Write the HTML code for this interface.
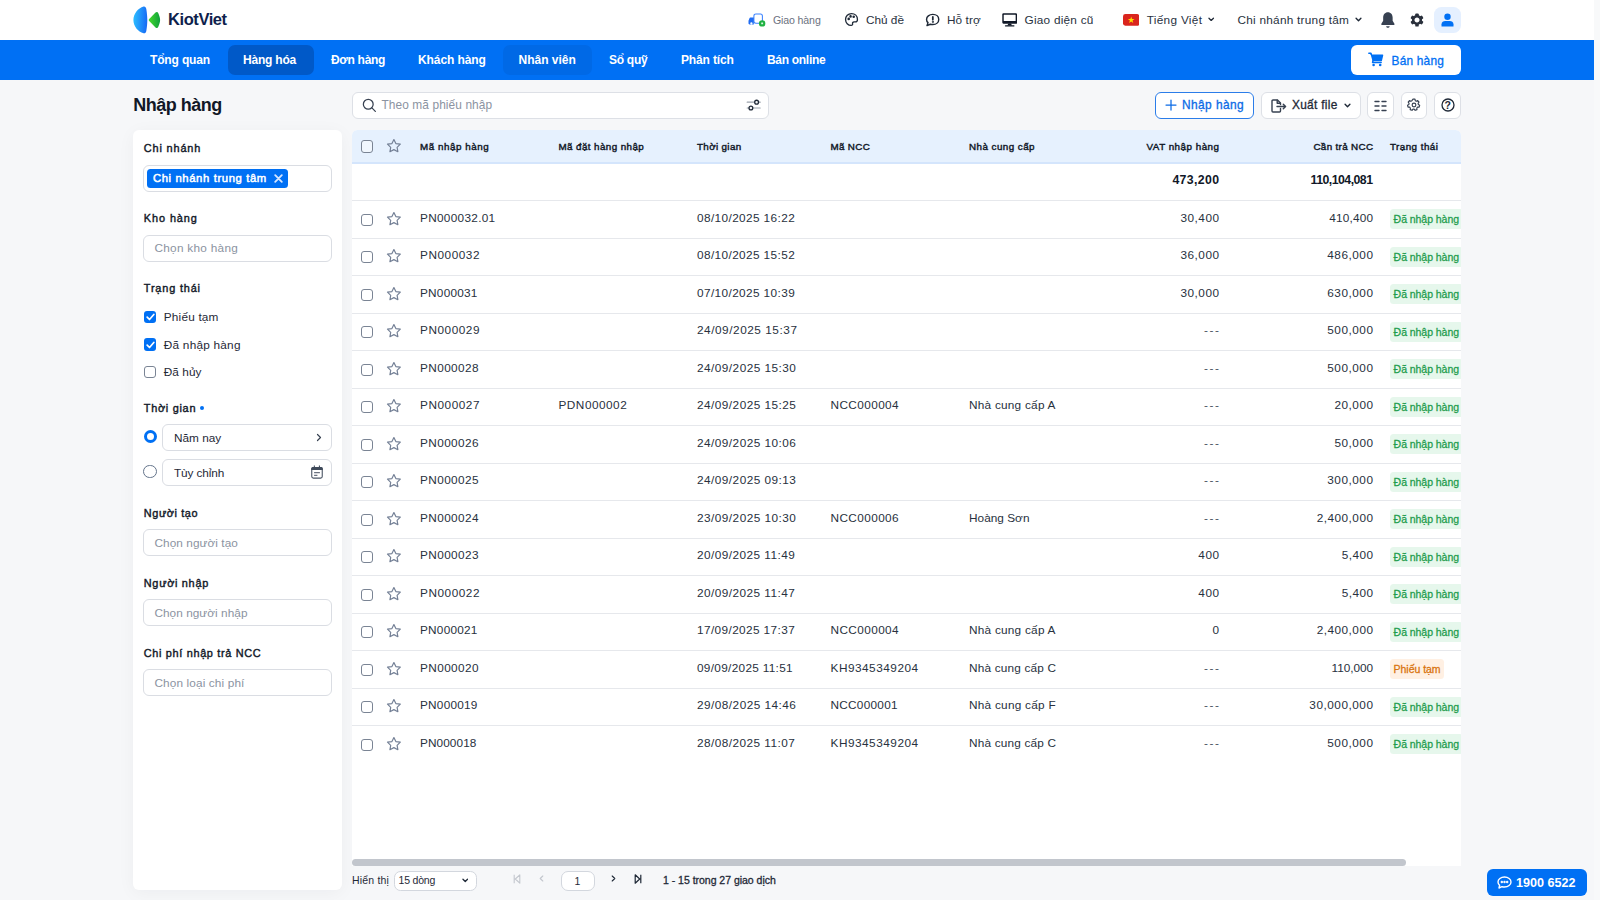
<!DOCTYPE html>
<html lang="vi"><head><meta charset="utf-8"><title>Nhập hàng - KiotViet</title>
<style>
*{box-sizing:border-box;margin:0;padding:0}
html,body{width:1600px;height:900px;overflow:hidden}
body{background:#f6f7f9;font-family:"Liberation Sans",sans-serif;color:#1f2937;position:relative;font-size:12px}
.abs{position:absolute}
svg{display:block}
/* top header */
#hdr{position:absolute;left:0;top:0;width:1594px;height:40px;background:#fff}
#sbar{position:absolute;left:1594px;top:0;width:6px;height:900px;background:#f8f9fa}
#nav{position:absolute;left:0;top:40px;width:1594px;height:40px;background:#0070f4}
.t{position:absolute;white-space:nowrap;line-height:1}
.nv{position:absolute;top:54px;color:#fff;font-weight:700;font-size:12px;white-space:nowrap;line-height:1}
.pill{position:absolute;top:45px;height:30px;border-radius:7px}
.hd{position:absolute;top:14.6px;font-size:11.8px;color:#283140;white-space:nowrap;line-height:1}
/* sidebar */
#side{position:absolute;left:133.3px;top:130px;width:208.4px;height:760.3px;background:#fff;border-radius:6px;box-shadow:0 3px 18px rgba(16,24,40,.045)}
.lb{position:absolute;left:10.5px;font-weight:400;-webkit-text-stroke:.4px #111827;font-size:10.9px;color:#111827;line-height:1;white-space:nowrap}
.inp{position:absolute;left:9.95px;width:189.15px;height:26.7px;border:1px solid #dadde3;border-radius:6px;background:#fff}
.ph{position:absolute;left:10.2px;top:7.4px;font-size:11.8px;color:#8b93a1;line-height:1;white-space:nowrap}
.ck{position:absolute;left:10.9px;width:12.3px;height:12.3px;border-radius:3px}
.ck.on{background:#0070f4}
.ck.off{border:1.25px solid #7a8494;background:#fff}
.ckl{position:absolute;left:30.5px;font-size:11.8px;color:#1f2937;line-height:1;white-space:nowrap}
/* table */
#tb{position:absolute;left:352px;top:130px;width:1109px;height:735.5px;background:#fff;border-radius:5.5px 5.5px 0 0;overflow:hidden}
#th{position:absolute;left:0;top:0;width:100%;height:34px;background:#e6f1fe;border-bottom:2px solid #d4e5fc}
.h{position:absolute;top:12px;font-weight:400;-webkit-text-stroke:.42px #111827;font-size:9.8px;color:#111827;line-height:1;white-space:nowrap}
.tr{position:absolute;left:0;width:100%;height:37.5px;border-top:1px solid #e6e8ec}
.cb{position:absolute;left:8.8px;top:12.6px;width:12.4px;height:12.4px;border:1.25px solid #7a8494;border-radius:3px;background:#fff}
.star{position:absolute;left:33.1px;top:8.9px;width:17.8px;height:17.8px}
.c{position:absolute;top:11.7px;font-size:11.8px;color:#283140;line-height:1;white-space:nowrap}
.c1{left:68px}.c2{left:206.5px}.c3{left:345px}.c4{left:478.5px}.c5{left:617px}
.r{text-align:right}
.c6{right:242px}.c7{right:88px}
.dash{color:#4b5563}
.bd{position:absolute;left:1038px;top:8.1px;height:20px;border-radius:3.5px;font-size:10.5px;line-height:20px;padding:0 3.6px;white-space:nowrap}
.bt{-webkit-text-stroke:.28px currentColor}
.md{-webkit-text-stroke:.3px currentColor}
.sb{-webkit-text-stroke:.5px currentColor}
.bd.g{background:#e6f7ec;color:#1f9d4d}
.bd.o{background:#fff0e3;color:#d9730d}
.b{font-weight:700;color:#111827}
</style></head><body>
<div id="hdr"></div><div id="sbar"></div><div id="nav"></div>
<!-- logo -->
<svg class="abs" style="left:133px;top:6px;width:30px;height:28px" viewBox="0 0 30 28">
<defs><linearGradient id="lg1" x1="0" y1="0.500" x2="1" y2="0.600"><stop offset="0" stop-color="#2bbcff"/><stop offset="1" stop-color="#1769f5"/></linearGradient>
<linearGradient id="lg2" x1="0" y1="0" x2="1" y2="0"><stop offset="0" stop-color="#45d92c"/><stop offset="1" stop-color="#0fa03c"/></linearGradient></defs>
<path d="M10.600 .5C5 2 .4 8 .4 14s4.600 12 10.200 13.300c1.400.3 2.400-.8 2.700-2.300.7-4 1-8 1-11s-.3-7-1-11C13 1.200 12 .2 10.600 .5z" fill="url(#lg1)"/>
<path d="M16.200 13l6.300-6.400c1-1 2.300-.7 2.800.6 1.200 2.800 1.800 4.800 1.800 6.800s-.6 4-1.800 6.800c-.5 1.300-1.800 1.600-2.800.6L16.200 15c-.6-.6-.6-1.400 0-2z" fill="url(#lg2)"/>
</svg>
<div class="t" style="letter-spacing:-0.42px;left:168px;top:10.800px;font-size:16.500px;font-weight:700;color:#0f1f4d">KiotViet</div>

<!-- header right -->
<svg class="abs" style="left:748px;top:12px;width:18px;height:15px" viewBox="0 0 18 15"><rect x="5.900" y="1.900" width="8.500" height="9.300" rx="2" fill="none" stroke="#3a82ff" stroke-width="1.050"/><path d="M2.300 5.400h3.500v7H1.600c-.7 0-1.100-.5-1.100-1.100V9c0-.4.100-.8.300-1.100l.8-1.900c.1-.4.400-.6.700-.6z" fill="#1f6bf2"/><circle cx="3.400" cy="11.500" r="1.150" fill="#fff"/><circle cx="14.150" cy="11.400" r="3.200" fill="#1fb141"/><rect x="13.200" y="10.500" width="1.900" height="1.800" rx=".3" fill="#d8f5df"/></svg>
<div class="hd" style="letter-spacing:-0.14px;left:773px;font-size:10.600px;top:14.700px;color:#6b7280">Giao hàng</div>

<svg class="abs" style="left:843.700px;top:12.300px;width:15px;height:15px" viewBox="0 0 24 24" fill="none" stroke="#1f2937" stroke-width="2.100" stroke-linecap="round" stroke-linejoin="round"><path d="M12 2.5C6.5 2.5 2.5 6.7 2.5 12s4 9.5 9 9.5c1.700 0 2.500-1.200 2.200-2.600-.4-1.600.6-3 2.300-3H18c2 0 3.500-1.600 3.500-4C21.500 6.500 17.500 2.500 12 2.500z"/><circle cx="7.500" cy="11" r="1" fill="#1f2937"/><circle cx="10.500" cy="7" r="1" fill="#1f2937"/><circle cx="15.500" cy="7.500" r="1" fill="#1f2937"/></svg>
<div class="hd" style="letter-spacing:-0.02px;left:866px">Chủ đề</div>

<svg class="abs" style="left:925.300px;top:13px;width:15px;height:14px" viewBox="0 0 24 22" fill="none" stroke="#1f2937" stroke-width="2.300" stroke-linecap="round" stroke-linejoin="round"><path d="M12.500 2C6.800 2 2.500 5.600 2.500 10c0 2 .8 3.800 2.300 5.200L3.200 20l5.300-2.200c1.200.3 2.600.4 4 .4 5.700 0 9.500-3.600 9.500-8.200S18.200 2 12.500 2z"/><path d="M12.500 6v4.500" stroke-width="2.800"/><circle cx="12.500" cy="14" r="1" fill="#1f2937" stroke-width="1"/></svg>
<div class="hd" style="letter-spacing:0.07px;left:947px">Hỗ trợ</div>

<svg class="abs" style="left:1001.700px;top:12.700px;width:15.400px;height:14px" viewBox="0 0 16 14.500"><rect x=".3" y=".3" width="15.400" height="10.800" rx="1.200" fill="#111827"/><rect x="1.800" y="1.700" width="12.400" height="6.600" rx=".3" fill="#fff"/><path d="M6.600 11h2.800l1 2H5.600z" fill="#111827"/><rect x="3" y="12.700" width="10" height="1.300" rx=".5" fill="#111827"/></svg>
<div class="hd" style="letter-spacing:0.24px;left:1024.5px">Giao diện cũ</div>

<svg class="abs" style="left:1123px;top:14px;width:16.400px;height:11.800px" viewBox="0 0 17 12" preserveAspectRatio="none"><rect width="17" height="12" rx="2.500" fill="#da251d"/><path d="M8.500 2.600l.85 2.500h2.650l-2.150 1.550.8 2.550L8.500 7.650 6.350 9.200l.8-2.550L5 5.100h2.650z" fill="#ffde00"/></svg>
<div class="hd" style="letter-spacing:0.31px;left:1146.700px">Tiếng Việt</div>
<svg class="abs" style="left:1208.400px;top:17.300px;width:6.400px;height:4.800px" viewBox="0 0 8 6" fill="none" stroke="#1f2937" stroke-width="1.600" stroke-linecap="round" stroke-linejoin="round"><path d="M1.200 1.500L4 4.300 6.800 1.500"/></svg>
<div class="hd" style="letter-spacing:0.25px;left:1237.5px">Chi nhánh trung tâm</div>
<svg class="abs" style="left:1355.200px;top:16.800px;width:7px;height:5.200px" viewBox="0 0 8 6" fill="none" stroke="#1f2937" stroke-width="1.600" stroke-linecap="round" stroke-linejoin="round"><path d="M1.200 1.500L4 4.300 6.800 1.500"/></svg>

<svg class="abs" style="left:1379.700px;top:10.600px;width:15.800px;height:18.200px" viewBox="0 0 15 17"><path d="M7.500 1C4.700 1 3 3.200 3 6v3.200L1.300 12c-.3.600 0 1.200.7 1.200h11c.7 0 1-.6.700-1.200L12 9.200V6c0-2.800-1.700-5-4.500-5z" fill="#374151"/><path d="M5.800 14.300c.2.900.9 1.500 1.700 1.500s1.500-.6 1.700-1.500z" fill="#374151"/></svg>
<svg class="abs" style="left:1410.200px;top:12.800px;width:14px;height:14px" viewBox="-7 -7 14 14"><g fill="#2a303c"><rect x="-1.750" y="-6.600" width="3.500" height="3.400" rx=".9" transform="rotate(0)"/><rect x="-1.750" y="-6.600" width="3.500" height="3.400" rx=".9" transform="rotate(60)"/><rect x="-1.750" y="-6.600" width="3.500" height="3.400" rx=".9" transform="rotate(120)"/><rect x="-1.750" y="-6.600" width="3.500" height="3.400" rx=".9" transform="rotate(180)"/><rect x="-1.750" y="-6.600" width="3.500" height="3.400" rx=".9" transform="rotate(240)"/><rect x="-1.750" y="-6.600" width="3.500" height="3.400" rx=".9" transform="rotate(300)"/></g><circle r="3.800" fill="none" stroke="#2a303c" stroke-width="2.600"/></svg>
<div class="abs" style="left:1434px;top:6.800px;width:27px;height:26.500px;border-radius:7.500px;background:#e5f0ff"></div>
<svg class="abs" style="left:1441px;top:13px;width:13px;height:14px" viewBox="0 0 13 14"><circle cx="6.500" cy="3.700" r="3.200" fill="#0070f4"/><path d="M.5 13.500v-2.300C.5 9 2.500 8 4.200 8h4.600c1.700 0 3.700 1 3.700 3.200v2.300z" fill="#0070f4"/></svg>

<!-- nav -->
<div class="pill" style="left:228px;width:86px;background:#0059c8"></div>
<div class="pill" style="left:503.200px;width:89.300px;background:#0069e6"></div>
<div class="nv" style="letter-spacing:-0.15px;left:150px">Tổng quan</div>
<div class="nv" style="letter-spacing:-0.2px;left:243px">Hàng hóa</div>
<div class="nv" style="letter-spacing:-0.31px;left:331px">Đơn hàng</div>
<div class="nv" style="letter-spacing:-0.09px;left:418px">Khách hàng</div>
<div class="nv" style="letter-spacing:-0.0px;left:518.5px">Nhân viên</div>
<div class="nv" style="letter-spacing:-0.27px;left:609px">Sổ quỹ</div>
<div class="nv" style="letter-spacing:-0.15px;left:681px">Phân tích</div>
<div class="nv" style="letter-spacing:-0.3px;left:767px">Bán online</div>
<div class="abs" style="left:1351px;top:45px;width:110px;height:30px;background:#fff;border-radius:6px"></div>
<svg class="abs" style="left:1368px;top:52px;width:16px;height:15px" viewBox="0 0 16 15"><path d="M.8 1.200h2.200l.6 2M3.600 3.200h11l-1.300 5.300H5.100z" fill="#0070f4" stroke="#0070f4" stroke-width="1.400" stroke-linejoin="round" stroke-linecap="round"/><path d="M5.100 8.500l-.6 2h8.700" fill="none" stroke="#0070f4" stroke-width="1.400" stroke-linecap="round" stroke-linejoin="round"/><circle cx="5.600" cy="13" r="1.300" fill="#0070f4"/><circle cx="12.200" cy="13" r="1.300" fill="#0070f4"/></svg>
<div class="t md" style="letter-spacing:0.2px;left:1391.5px;top:55.8px;font-size:11.9px;color:#0070f4">Bán hàng</div>

<!-- page title + search + toolbar -->
<div class="t" style="letter-spacing:-0.49px;left:133.200px;top:96px;font-size:18px;font-weight:700;color:#111827">Nhập hàng</div>
<div class="abs" style="left:352px;top:91.600px;width:417px;height:27.200px;background:#fff;border:1px solid #dde0e6;border-radius:6px"></div>
<svg class="abs" style="left:362.300px;top:97.900px;width:14.600px;height:14.600px" viewBox="0 0 14 14" fill="none" stroke="#374151" stroke-width="1.200" stroke-linecap="round"><circle cx="6" cy="6" r="4.700"/><path d="M9.500 9.500l3.300 3.300"/></svg>
<div class="t" style="letter-spacing:0.09px;left:381.500px;top:100.300px;font-size:11.900px;color:#8b93a1">Theo mã phiếu nhập</div>
<svg class="abs" style="left:746px;top:98px;width:15px;height:13px" viewBox="0 0 15 13" fill="none" stroke-linecap="round"><path d="M1.200 4.200h13M1.200 10h13" stroke="#9aa1ab" stroke-width="1.200"/><circle cx="10.600" cy="4.150" r="1.900" fill="#f3f4f6" stroke="#1f2937" stroke-width="1.300"/><circle cx="4.900" cy="10" r="1.900" fill="#f3f4f6" stroke="#1f2937" stroke-width="1.300"/></svg>

<div class="abs" style="left:1155px;top:91.600px;width:99px;height:27.200px;background:#fff;border:1px solid #2b7de9;border-radius:6px"></div>
<svg class="abs" style="left:1165px;top:99px;width:12px;height:12px" viewBox="0 0 12 12" fill="none" stroke="#0b6be6" stroke-width="1.250" stroke-linecap="round"><path d="M6 1v10M1 6h10"/></svg>
<div class="t md" style="letter-spacing:0.43px;left:1182px;top:100.2px;font-size:11.9px;color:#0b6be6">Nhập hàng</div>

<div class="abs" style="left:1261px;top:91.600px;width:99.5px;height:27.200px;background:#fff;border:1px solid #dde0e6;border-radius:6px"></div>
<svg class="abs" style="left:1271.300px;top:98.500px;width:16px;height:14px" viewBox="0 0 16 14" fill="none" stroke="#374151" stroke-width="1.400" stroke-linecap="round" stroke-linejoin="round"><path d="M9.500 9.500V12a1 1 0 0 1-1 1H2a1 1 0 0 1-1-1V2a1 1 0 0 1 1-1h4.500l3 3v1.500"/><path d="M6.200 1.200V4.300h3.100"/><path d="M6 7.500h8.500M12.300 5.200l2.300 2.300-2.300 2.300"/></svg>
<div class="t md" style="letter-spacing:0.29px;left:1292px;top:100.2px;font-size:11.9px;color:#1f2937">Xuất file</div>
<svg class="abs" style="left:1343.5px;top:102.5px;width:7px;height:5.2px" viewBox="0 0 8 6" fill="none" stroke="#1f2937" stroke-width="1.600" stroke-linecap="round" stroke-linejoin="round"><path d="M1.200 1.500L4 4.300 6.800 1.500"/></svg>

<div class="abs" style="left:1367.3px;top:91.600px;width:26.4px;height:27.200px;background:#fff;border:1px solid #dde0e6;border-radius:6px"></div>
<svg class="abs" style="left:1374.200px;top:99.500px;width:13px;height:12px" viewBox="0 0 13 12" fill="none" stroke="#374151" stroke-width="1.400" stroke-linecap="round"><path d="M1 1.500h4M8 1.500h4M1 6h4M8 6h4M1 10.500h4M8 10.500h4"/></svg>
<div class="abs" style="left:1401.2px;top:91.600px;width:26px;height:27.200px;background:#fff;border:1px solid #dde0e6;border-radius:6px"></div>
<svg class="abs" style="left:1407.200px;top:98.400px;width:14px;height:14px" viewBox="0 0 24 24" fill="none" stroke="#374151" stroke-width="2" stroke-linejoin="round"><path d="M10.300 2.500h3.400l.5 2.600 1.800.9 2.400-1.200 2.200 2.600-1.500 2.200.3 2 2.300 1.300-.9 3.200-2.700.1-1.300 1.500.3 2.700-3.100 1.200-1.700-2h-2l-1.700 2-3.100-1.200.3-2.700-1.300-1.500-2.700-.1-.9-3.200 2.300-1.300.3-2-1.500-2.200 2.200-2.600 2.400 1.200 1.800-.9z" transform="translate(0 -.5)"/><circle cx="12" cy="12" r="3.200"/></svg>
<div class="abs" style="left:1434.3px;top:91.600px;width:26.4px;height:27.200px;background:#fff;border:1px solid #dde0e6;border-radius:6px"></div>
<svg class="abs" style="left:1440.500px;top:98.400px;width:14px;height:14px" viewBox="0 0 14 14" fill="none" stroke="#1f2937" stroke-width="1.300" stroke-linecap="round"><circle cx="7" cy="7" r="6"/></svg>
<div class="t" style="left:1444.500px;top:99.500px;font-size:10.500px;font-weight:700;color:#1f2937">?</div>
<div id="side">
<div class="lb" style="letter-spacing:0.86px;top:13.1px">Chi nhánh</div>
<div class="inp" style="top:35px"></div>
<div class="abs" style="left:13.800px;top:38.500px;width:141.200px;height:19.700px;background:#0070f4;border-radius:3.500px"></div>
<div class="t sb" style="letter-spacing:0.61px;left:19.600px;top:43.200px;font-size:11.300px;color:#fff">Chi nhánh trung tâm</div>
<svg class="abs" style="left:140.500px;top:44.100px;width:9px;height:9px" viewBox="0 0 9 9" fill="none" stroke="#d6e6ff" stroke-width="1.800" stroke-linecap="round"><path d="M1.200 1.200l6.600 6.600M7.800 1.200L1.200 7.800"/></svg>

<div class="lb" style="letter-spacing:0.92px;top:83.1px">Kho hàng</div>
<div class="inp" style="top:105px"><span class="ph" style="letter-spacing:0.28px">Chọn kho hàng</span></div>

<div class="lb" style="letter-spacing:0.84px;top:153.1px">Trạng thái</div>
<i class="ck on" style="top:180.800px"></i><svg class="abs" style="left:12.300px;top:183px;width:9px;height:8px" viewBox="0 0 9 8" fill="none" stroke="#fff" stroke-width="1.700" stroke-linecap="round" stroke-linejoin="round"><path d="M1.200 4.200l2.300 2.300 4.300-5"/></svg>
<div class="ckl" style="letter-spacing:0.19px;top:182.300px">Phiếu tạm</div>
<i class="ck on" style="top:208.300px"></i><svg class="abs" style="left:12.300px;top:210.500px;width:9px;height:8px" viewBox="0 0 9 8" fill="none" stroke="#fff" stroke-width="1.700" stroke-linecap="round" stroke-linejoin="round"><path d="M1.200 4.200l2.300 2.300 4.300-5"/></svg>
<div class="ckl" style="letter-spacing:0.23px;top:209.600px">Đã nhập hàng</div>
<i class="ck off" style="top:235.900px"></i>
<div class="ckl" style="letter-spacing:0.04px;top:237.200px">Đã hủy</div>

<div class="lb" style="letter-spacing:0.72px;top:272.6px">Thời gian</div>
<div class="abs" style="left:66.300px;top:275.800px;width:4.500px;height:4.500px;border-radius:50%;background:#0070f4"></div>
<div class="abs" style="left:10.500px;top:299.600px;width:13.400px;height:13.400px;border-radius:50%;border:3.600px solid #0070f4;background:#fff"></div>
<div class="inp" style="left:29.100px;width:170px;top:294.100px"><span class="ph" style="letter-spacing:-0.0px;color:#1f2937;left:10.600px;top:8.300px">Năm nay</span>
<svg class="abs" style="left:152.500px;top:8px;width:6px;height:9px" viewBox="0 0 6 9" fill="none" stroke="#374151" stroke-width="1.200" stroke-linecap="round" stroke-linejoin="round"><path d="M1.500 1.500l3 3-3 3"/></svg></div>
<div class="abs" style="left:10.200px;top:334.500px;width:13.600px;height:13.600px;border-radius:50%;border:1.200px solid #64748b;background:#fff"></div>
<div class="inp" style="left:29.100px;width:170px;top:329.400px"><span class="ph" style="letter-spacing:-0.1px;color:#1f2937;left:10.600px;top:7.200px">Tùy chỉnh</span>
<svg class="abs" style="left:147.600px;top:4.600px;width:13px;height:14.500px" viewBox="0 0 13 14.500" fill="none"><rect x="2.800" y=".5" width="1.100" height="2" fill="#4b5565"/><rect x="7.900" y=".5" width="1.100" height="2" fill="#4b5565"/><rect x=".75" y="2.550" width="10.500" height="10.600" rx="1.600" stroke="#4b5565" stroke-width="1.100"/><path d="M.2 5.100V3.600a1.600 1.600 0 0 1 1.600-1.600h8.400a1.600 1.600 0 0 1 1.600 1.600v1.500z" fill="#3f4a5a"/><path d="M3.100 7.600h5.800M3.100 10.400h3.300" stroke="#6b7280" stroke-width="1.100"/></svg></div>

<div class="lb" style="letter-spacing:0.6px;top:377.6px">Người tạo</div>
<div class="inp" style="top:399.400px"><span class="ph" style="letter-spacing:0.07px">Chọn người tạo</span></div>
<div class="lb" style="letter-spacing:0.71px;top:447.6px">Người nhập</div>
<div class="inp" style="top:469.400px"><span class="ph" style="letter-spacing:0.05px">Chọn người nhập</span></div>
<div class="lb" style="letter-spacing:0.67px;top:517.6px">Chi phí nhập trả NCC</div>
<div class="inp" style="top:539.400px"><span class="ph" style="letter-spacing:0.13px">Chọn loại chi phí</span></div>
</div>
<div id="tb">
<div id="th">
<i class="cb" style="top:10.400px;background:rgba(255,255,255,.45)"></i><span class="abs" style="left:0;top:-2.300px"><svg class="star" viewBox="0 0 24 24"><path d="M12 3.4l2.65 5.45 6 .85-4.35 4.2 1.05 5.95L12 17l-5.350 2.850 1.050-5.950-4.350-4.200 6-.850z" fill="none" stroke="#748096" stroke-width="1.600" stroke-linejoin="round"/></svg></span>
<span class="h" style="letter-spacing:0.55px;left:68px">Mã nhập hàng</span>
<span class="h" style="letter-spacing:0.42px;left:206.500px">Mã đặt hàng nhập</span>
<span class="h" style="letter-spacing:0.36px;left:345px">Thời gian</span>
<span class="h" style="letter-spacing:0.34px;left:478.500px">Mã NCC</span>
<span class="h" style="letter-spacing:0.46px;left:617px">Nhà cung cấp</span>
<span class="h r" style="letter-spacing:0.5px;margin-right:-0.5px;right:242px">VAT nhập hàng</span>
<span class="h r" style="letter-spacing:0.35px;margin-right:-0.35px;right:88px">Cần trả NCC</span>
<span class="h" style="letter-spacing:0.46px;left:1038px">Trạng thái</span>
</div>
<div class="abs b r" style="letter-spacing:0.36px;margin-right:-0.36px;right:242px;top:43.500px;font-size:12.300px;line-height:1">473,200</div>
<div class="abs b r" style="letter-spacing:-0.53px;margin-right:0.53px;right:88px;top:43.500px;font-size:12.300px;line-height:1">110,104,081</div>
<div class="tr" style="top:70.0px">
<i class="cb"></i><svg class="star" viewBox="0 0 24 24"><path d="M12 3.4l2.65 5.45 6 .85-4.35 4.2 1.05 5.95L12 17l-5.350 2.850 1.050-5.950-4.350-4.200 6-.850z" fill="none" stroke="#748096" stroke-width="1.600" stroke-linejoin="round"/></svg>
<span class="c c1" style="letter-spacing:0.3px">PN000032.01</span><span class="c c2"></span><span class="c c3" style="letter-spacing:0.39px">08/10/2025 16:22</span><span class="c c4"></span><span class="c r c6" style="letter-spacing:0.48px;margin-right:-0.48px">30,400</span><span class="c r c7" style="letter-spacing:0.17px;margin-right:-0.17px">410,400</span><span class="bd g"><span class="bt" style="letter-spacing:-0.05px">Đã nhập hàng</span></span>
</div>
<div class="tr" style="top:107.5px">
<i class="cb"></i><svg class="star" viewBox="0 0 24 24"><path d="M12 3.4l2.65 5.45 6 .85-4.35 4.2 1.05 5.95L12 17l-5.350 2.850 1.050-5.950-4.350-4.200 6-.850z" fill="none" stroke="#748096" stroke-width="1.600" stroke-linejoin="round"/></svg>
<span class="c c1" style="letter-spacing:0.54px">PN000032</span><span class="c c2"></span><span class="c c3" style="letter-spacing:0.39px">08/10/2025 15:52</span><span class="c c4"></span><span class="c r c6" style="letter-spacing:0.48px;margin-right:-0.48px">36,000</span><span class="c r c7" style="letter-spacing:0.52px;margin-right:-0.52px">486,000</span><span class="bd g"><span class="bt" style="letter-spacing:-0.05px">Đã nhập hàng</span></span>
</div>
<div class="tr" style="top:145.0px">
<i class="cb"></i><svg class="star" viewBox="0 0 24 24"><path d="M12 3.4l2.65 5.45 6 .85-4.35 4.2 1.05 5.95L12 17l-5.350 2.850 1.050-5.950-4.350-4.200 6-.850z" fill="none" stroke="#748096" stroke-width="1.600" stroke-linejoin="round"/></svg>
<span class="c c1" style="letter-spacing:0.23px">PN000031</span><span class="c c2"></span><span class="c c3" style="letter-spacing:0.39px">07/10/2025 10:39</span><span class="c c4"></span><span class="c r c6" style="letter-spacing:0.48px;margin-right:-0.48px">30,000</span><span class="c r c7" style="letter-spacing:0.52px;margin-right:-0.52px">630,000</span><span class="bd g"><span class="bt" style="letter-spacing:-0.05px">Đã nhập hàng</span></span>
</div>
<div class="tr" style="top:182.5px">
<i class="cb"></i><svg class="star" viewBox="0 0 24 24"><path d="M12 3.4l2.65 5.45 6 .85-4.35 4.2 1.05 5.95L12 17l-5.350 2.850 1.050-5.950-4.350-4.200 6-.850z" fill="none" stroke="#748096" stroke-width="1.600" stroke-linejoin="round"/></svg>
<span class="c c1" style="letter-spacing:0.54px">PN000029</span><span class="c c2"></span><span class="c c3" style="letter-spacing:0.54px">24/09/2025 15:37</span><span class="c c4"></span><span class="c r c6 dash" style="letter-spacing:1.57px;margin-right:-1.57px">---</span><span class="c r c7" style="letter-spacing:0.52px;margin-right:-0.52px">500,000</span><span class="bd g"><span class="bt" style="letter-spacing:-0.05px">Đã nhập hàng</span></span>
</div>
<div class="tr" style="top:220.0px">
<i class="cb"></i><svg class="star" viewBox="0 0 24 24"><path d="M12 3.4l2.65 5.45 6 .85-4.35 4.2 1.05 5.95L12 17l-5.350 2.850 1.050-5.950-4.350-4.200 6-.850z" fill="none" stroke="#748096" stroke-width="1.600" stroke-linejoin="round"/></svg>
<span class="c c1" style="letter-spacing:0.4px">PN000028</span><span class="c c2"></span><span class="c c3" style="letter-spacing:0.47px">24/09/2025 15:30</span><span class="c c4"></span><span class="c r c6 dash" style="letter-spacing:1.57px;margin-right:-1.57px">---</span><span class="c r c7" style="letter-spacing:0.52px;margin-right:-0.52px">500,000</span><span class="bd g"><span class="bt" style="letter-spacing:-0.05px">Đã nhập hàng</span></span>
</div>
<div class="tr" style="top:257.5px">
<i class="cb"></i><svg class="star" viewBox="0 0 24 24"><path d="M12 3.4l2.65 5.45 6 .85-4.35 4.2 1.05 5.95L12 17l-5.350 2.850 1.050-5.950-4.350-4.200 6-.850z" fill="none" stroke="#748096" stroke-width="1.600" stroke-linejoin="round"/></svg>
<span class="c c1" style="letter-spacing:0.54px">PN000027</span><span class="c c2" style="letter-spacing:0.49px">PDN000002</span><span class="c c3" style="letter-spacing:0.47px">24/09/2025 15:25</span><span class="c c4" style="letter-spacing:0.4px">NCC000004</span><span class="c c5" style="letter-spacing:0.24px">Nhà cung cấp A</span><span class="c r c6 dash" style="letter-spacing:1.57px;margin-right:-1.57px">---</span><span class="c r c7" style="letter-spacing:0.48px;margin-right:-0.48px">20,000</span><span class="bd g"><span class="bt" style="letter-spacing:-0.05px">Đã nhập hàng</span></span>
</div>
<div class="tr" style="top:295.0px">
<i class="cb"></i><svg class="star" viewBox="0 0 24 24"><path d="M12 3.4l2.65 5.45 6 .85-4.35 4.2 1.05 5.95L12 17l-5.350 2.850 1.050-5.950-4.350-4.200 6-.850z" fill="none" stroke="#748096" stroke-width="1.600" stroke-linejoin="round"/></svg>
<span class="c c1" style="letter-spacing:0.4px">PN000026</span><span class="c c2"></span><span class="c c3" style="letter-spacing:0.47px">24/09/2025 10:06</span><span class="c c4"></span><span class="c r c6 dash" style="letter-spacing:1.57px;margin-right:-1.57px">---</span><span class="c r c7" style="letter-spacing:0.48px;margin-right:-0.48px">50,000</span><span class="bd g"><span class="bt" style="letter-spacing:-0.05px">Đã nhập hàng</span></span>
</div>
<div class="tr" style="top:332.5px">
<i class="cb"></i><svg class="star" viewBox="0 0 24 24"><path d="M12 3.4l2.65 5.45 6 .85-4.35 4.2 1.05 5.95L12 17l-5.350 2.850 1.050-5.950-4.350-4.200 6-.850z" fill="none" stroke="#748096" stroke-width="1.600" stroke-linejoin="round"/></svg>
<span class="c c1" style="letter-spacing:0.4px">PN000025</span><span class="c c2"></span><span class="c c3" style="letter-spacing:0.47px">24/09/2025 09:13</span><span class="c c4"></span><span class="c r c6 dash" style="letter-spacing:1.57px;margin-right:-1.57px">---</span><span class="c r c7" style="letter-spacing:0.52px;margin-right:-0.52px">300,000</span><span class="bd g"><span class="bt" style="letter-spacing:-0.05px">Đã nhập hàng</span></span>
</div>
<div class="tr" style="top:370.0px">
<i class="cb"></i><svg class="star" viewBox="0 0 24 24"><path d="M12 3.4l2.65 5.45 6 .85-4.35 4.2 1.05 5.95L12 17l-5.350 2.850 1.050-5.950-4.350-4.200 6-.850z" fill="none" stroke="#748096" stroke-width="1.600" stroke-linejoin="round"/></svg>
<span class="c c1" style="letter-spacing:0.4px">PN000024</span><span class="c c2"></span><span class="c c3" style="letter-spacing:0.47px">23/09/2025 10:30</span><span class="c c4" style="letter-spacing:0.4px">NCC000006</span><span class="c c5" style="letter-spacing:0.03px">Hoàng Sơn</span><span class="c r c6 dash" style="letter-spacing:1.57px;margin-right:-1.57px">---</span><span class="c r c7" style="letter-spacing:0.48px;margin-right:-0.48px">2,400,000</span><span class="bd g"><span class="bt" style="letter-spacing:-0.05px">Đã nhập hàng</span></span>
</div>
<div class="tr" style="top:407.5px">
<i class="cb"></i><svg class="star" viewBox="0 0 24 24"><path d="M12 3.4l2.65 5.45 6 .85-4.35 4.2 1.05 5.95L12 17l-5.350 2.850 1.050-5.950-4.350-4.200 6-.850z" fill="none" stroke="#748096" stroke-width="1.600" stroke-linejoin="round"/></svg>
<span class="c c1" style="letter-spacing:0.4px">PN000023</span><span class="c c2"></span><span class="c c3" style="letter-spacing:0.45px">20/09/2025 11:49</span><span class="c c4"></span><span class="c r c6" style="letter-spacing:0.49px;margin-right:-0.49px">400</span><span class="c r c7" style="letter-spacing:0.41px;margin-right:-0.41px">5,400</span><span class="bd g"><span class="bt" style="letter-spacing:-0.05px">Đã nhập hàng</span></span>
</div>
<div class="tr" style="top:445.0px">
<i class="cb"></i><svg class="star" viewBox="0 0 24 24"><path d="M12 3.4l2.65 5.45 6 .85-4.35 4.2 1.05 5.95L12 17l-5.350 2.850 1.050-5.950-4.350-4.200 6-.850z" fill="none" stroke="#748096" stroke-width="1.600" stroke-linejoin="round"/></svg>
<span class="c c1" style="letter-spacing:0.54px">PN000022</span><span class="c c2"></span><span class="c c3" style="letter-spacing:0.45px">20/09/2025 11:47</span><span class="c c4"></span><span class="c r c6" style="letter-spacing:0.49px;margin-right:-0.49px">400</span><span class="c r c7" style="letter-spacing:0.41px;margin-right:-0.41px">5,400</span><span class="bd g"><span class="bt" style="letter-spacing:-0.05px">Đã nhập hàng</span></span>
</div>
<div class="tr" style="top:482.5px">
<i class="cb"></i><svg class="star" viewBox="0 0 24 24"><path d="M12 3.4l2.65 5.45 6 .85-4.35 4.2 1.05 5.95L12 17l-5.350 2.850 1.050-5.950-4.350-4.200 6-.850z" fill="none" stroke="#748096" stroke-width="1.600" stroke-linejoin="round"/></svg>
<span class="c c1" style="letter-spacing:0.23px">PN000021</span><span class="c c2"></span><span class="c c3" style="letter-spacing:0.39px">17/09/2025 17:37</span><span class="c c4" style="letter-spacing:0.4px">NCC000004</span><span class="c c5" style="letter-spacing:0.24px">Nhà cung cấp A</span><span class="c r c6" style="letter-spacing:0px;margin-right:0px">0</span><span class="c r c7" style="letter-spacing:0.48px;margin-right:-0.48px">2,400,000</span><span class="bd g"><span class="bt" style="letter-spacing:-0.05px">Đã nhập hàng</span></span>
</div>
<div class="tr" style="top:520.0px">
<i class="cb"></i><svg class="star" viewBox="0 0 24 24"><path d="M12 3.4l2.65 5.45 6 .85-4.35 4.2 1.05 5.95L12 17l-5.350 2.850 1.050-5.950-4.350-4.200 6-.850z" fill="none" stroke="#748096" stroke-width="1.600" stroke-linejoin="round"/></svg>
<span class="c c1" style="letter-spacing:0.4px">PN000020</span><span class="c c2"></span><span class="c c3" style="letter-spacing:0.31px">09/09/2025 11:51</span><span class="c c4" style="letter-spacing:0.51px">KH9345349204</span><span class="c c5" style="letter-spacing:0.19px">Nhà cung cấp C</span><span class="c r c6 dash" style="letter-spacing:1.57px;margin-right:-1.57px">---</span><span class="c r c7" style="letter-spacing:-0.05px;margin-right:0.05px">110,000</span><span class="bd o"><span class="bt" style="letter-spacing:-0.04px">Phiếu tạm</span></span>
</div>
<div class="tr" style="top:557.5px">
<i class="cb"></i><svg class="star" viewBox="0 0 24 24"><path d="M12 3.4l2.65 5.45 6 .85-4.35 4.2 1.05 5.95L12 17l-5.350 2.850 1.050-5.950-4.350-4.200 6-.850z" fill="none" stroke="#748096" stroke-width="1.600" stroke-linejoin="round"/></svg>
<span class="c c1" style="letter-spacing:0.23px">PN000019</span><span class="c c2"></span><span class="c c3" style="letter-spacing:0.47px">29/08/2025 14:46</span><span class="c c4" style="letter-spacing:0.27px">NCC000001</span><span class="c c5" style="letter-spacing:0.26px">Nhà cung cấp F</span><span class="c r c6 dash" style="letter-spacing:1.57px;margin-right:-1.57px">---</span><span class="c r c7" style="letter-spacing:0.51px;margin-right:-0.51px">30,000,000</span><span class="bd g"><span class="bt" style="letter-spacing:-0.05px">Đã nhập hàng</span></span>
</div>
<div class="tr" style="top:595.0px">
<i class="cb"></i><svg class="star" viewBox="0 0 24 24"><path d="M12 3.4l2.65 5.45 6 .85-4.35 4.2 1.05 5.95L12 17l-5.350 2.850 1.050-5.950-4.350-4.200 6-.850z" fill="none" stroke="#748096" stroke-width="1.600" stroke-linejoin="round"/></svg>
<span class="c c1" style="letter-spacing:0.09px">PN000018</span><span class="c c2"></span><span class="c c3" style="letter-spacing:0.45px">28/08/2025 11:07</span><span class="c c4" style="letter-spacing:0.51px">KH9345349204</span><span class="c c5" style="letter-spacing:0.19px">Nhà cung cấp C</span><span class="c r c6 dash" style="letter-spacing:1.57px;margin-right:-1.57px">---</span><span class="c r c7" style="letter-spacing:0.52px;margin-right:-0.52px">500,000</span><span class="bd g"><span class="bt" style="letter-spacing:-0.05px">Đã nhập hàng</span></span>
</div>
<div class="abs" style="left:0;top:729.300px;width:1054px;height:6.400px;border-radius:4px;background:#c2c6cd"></div>
</div>
<!-- footer -->
<div class="t" style="letter-spacing:0.18px;left:352px;top:875.200px;font-size:10.500px;color:#1f2937">Hiển thị</div>
<div class="abs" style="left:393.800px;top:871.200px;width:83px;height:19.400px;background:#fff;border:1px solid #d3d7de;border-radius:6.500px"></div>
<div class="t" style="letter-spacing:-0.19px;left:398.500px;top:875.200px;font-size:10.500px;color:#1f2937">15 dòng</div>
<svg class="abs" style="left:461.800px;top:878.300px;width:6.500px;height:5px" viewBox="0 0 8 6" fill="none" stroke="#1f2937" stroke-width="1.600" stroke-linecap="round" stroke-linejoin="round"><path d="M1.200 1.500L4 4.300 6.800 1.500"/></svg>
<svg class="abs" style="left:513px;top:873.700px;width:8px;height:10px" viewBox="0 0 8 10" fill="none" stroke="#c3c7ce" stroke-width="1.100" stroke-linejoin="round"><path d="M1.200 .8v8.400M6.800 .8v8.400L2.300 5z"/></svg>
<svg class="abs" style="left:539px;top:875px;width:5px;height:7px" viewBox="0 0 5 7" fill="none" stroke="#c3c7ce" stroke-width="1.100" stroke-linecap="round" stroke-linejoin="round"><path d="M3.800 1L1.200 3.500 3.800 6"/></svg>
<div class="abs" style="left:561px;top:871px;width:33.800px;height:19.700px;background:#fff;border:1px solid #d3d7de;border-radius:7px"></div>
<div class="t" style="left:574.500px;top:876px;font-size:10.500px;color:#1f2937">1</div>
<svg class="abs" style="left:610.500px;top:875px;width:5px;height:7px" viewBox="0 0 5 7" fill="none" stroke="#1f2937" stroke-width="1.100" stroke-linecap="round" stroke-linejoin="round"><path d="M1.200 1l2.600 2.500L1.200 6"/></svg>
<svg class="abs" style="left:634.200px;top:873.700px;width:8px;height:10px" viewBox="0 0 8 10" fill="none" stroke="#1f2937" stroke-width="1.200" stroke-linejoin="round"><path d="M6.800 .8v8.400M1.200 .8v8.400L5.700 5z"/></svg>
<div class="t md" style="letter-spacing:-0.02px;left:663px;top:875.200px;font-size:10.500px;color:#1f2937">1 - 15 trong 27 giao dịch</div>
<!-- hotline -->
<div class="abs" style="left:1487px;top:869px;width:99.600px;height:26.700px;background:#0070f4;border-radius:6px"></div>
<svg class="abs" style="left:1497px;top:876.300px;width:15px;height:13px" viewBox="0 0 15 13" fill="none" stroke="#fff" stroke-width="1.400" stroke-linejoin="round"><path d="M7.500 1C3.800 1 1 3.200 1 6c0 1.300.6 2.400 1.600 3.300L2 12l3-1.300c.8.200 1.600.300 2.500.300 3.700 0 6.500-2.200 6.500-5S11.200 1 7.500 1z"/><circle cx="4.800" cy="6" r=".5" fill="#fff"/><circle cx="7.500" cy="6" r=".5" fill="#fff"/><circle cx="10.200" cy="6" r=".5" fill="#fff"/></svg>
<div class="t" style="letter-spacing:-0.0px;left:1516px;top:876.500px;font-size:12.600px;font-weight:700;color:#fff">1900 6522</div>

</body></html>
